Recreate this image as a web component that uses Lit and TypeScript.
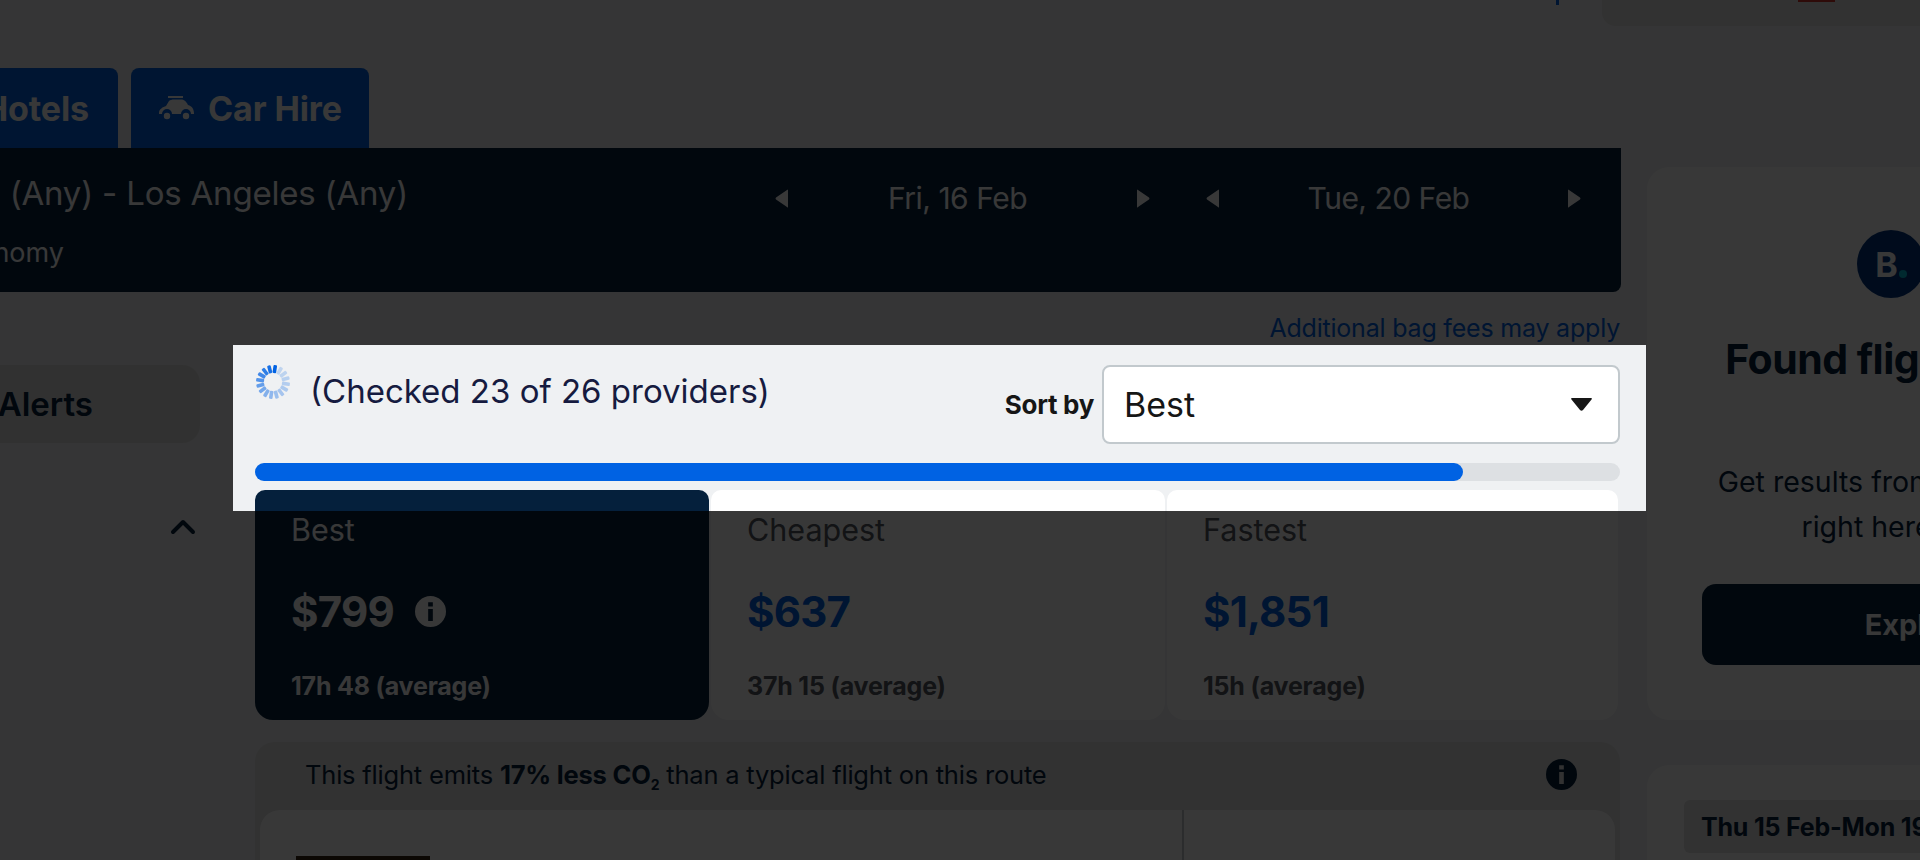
import { LitElement, html, css, svg } from "lit";
import { customElement } from "lit/decorators.js";

const CHECKED = 23;
const TOTAL = 26;

const cards = [
	{ label: "Best", price: "$799", sub: "17h 48 (average)", active: true },
	{ label: "Cheapest", price: "$637", sub: "37h 15 (average)", active: false },
	{ label: "Fastest", price: "$1,851", sub: "15h (average)", active: false },
];

const info = (cls: string) => html`
	<svg class=${cls} viewBox="0 0 24 24">
		<path fill="currentColor" fill-rule="evenodd" d="M12 0a12 12 0 1 0 0 24a12 12 0 0 0 0-24z M10.2 4.8h3.6v3.4h-3.6z M10.2 10h3.6v9.4h-3.6z"></path>
	</svg>
`;

const arrow = (left: boolean) => html`
	<svg class="arrow" viewBox="0 0 13 19">
		<path fill="currentColor" d=${left ? "M13 1L13 18Q13 19 12 18L1 10.5Q0 9.5 1 8.5L12 1Q13 0 13 1z" : "M0 1L0 18Q0 19 1 18L12 10.5Q13 9.5 12 8.5L1 1Q0 0 0 1z"}></path>
	</svg>
`;

// 16 bars, darkest at the top, fading counter-clockwise
const spinner = () => html`
	<svg class="spinner" viewBox="0 0 36 36">
		${Array.from({ length: 16 }, (_, i) => svg`
			<rect x="16.2" y="1" width="3.6" height="8" rx="1" fill="#0062e3"
				opacity=${(0.2 + 0.8 * Math.pow(1 - i / 16, 2)).toFixed(2)}
				transform=${`rotate(${8 - i * 22.5} 18 18)`}></rect>
		`)}
	</svg>
`;

@customElement("app-root")
export class AppRoot extends LitElement {
	static styles = css`
		:host {
			display: block;
			--font: "Inter", "Liberation Sans", sans-serif;
		}
		.page {
			position: relative;
			width: 1920px;
			height: 860px;
			overflow: hidden;
			background: #eff1f3;
			font-family: var(--font);
			color: #05203c;
		}
		.spot {
			position: absolute;
			left: 233px;
			top: 345px;
			width: 1413px;
			height: 166px;
			box-shadow: 0 0 0 2000px rgba(0, 0, 0, 0.78);
			pointer-events: none;
		}

		.head {
			height: 68px;
			display: flex;
			justify-content: flex-end;
			align-items: flex-start;
		}
		.tick {
			width: 3px;
			height: 5px;
			margin-right: 43px;
			background: #0062e3;
		}
		.locale {
			width: 318px;
			height: 26px;
			display: flex;
			justify-content: flex-end;
			background: #e2e2e2;
			border-bottom-left-radius: 14px;
		}
		.flag {
			width: 37px;
			height: 2px;
			margin-right: 85px;
			background: #d0342c;
		}

		.tabs {
			height: 80px;
			display: flex;
			gap: 13px;
		}
		.tab {
			display: flex;
			align-items: center;
			justify-content: flex-end;
			overflow: hidden;
			white-space: nowrap;
			background: #0062e3;
			color: #fff;
			border-radius: 8px 8px 0 0;
			font-size: 34px;
			font-weight: 700;
			letter-spacing: -0.1px;
		}
		.tab.hotels {
			width: 118px;
			padding-right: 29px;
			box-sizing: border-box;
			border-top-left-radius: 0;
		}
		.tab.car {
			width: 238px;
			box-sizing: border-box;
			padding-left: 27px;
			justify-content: flex-start;
			gap: 13px;
		}
		.car-icon {
			width: 37px;
			height: 26px;
			flex: none;
		}

		.body {
			display: flex;
		}
		.main {
			width: 1621px;
			flex: none;
		}
		.bar {
			height: 144px;
			display: flex;
			background: #05203c;
			color: #fff;
			border-bottom-right-radius: 8px;
		}
		.trip {
			width: 775px;
			flex: none;
			display: flex;
			flex-direction: column;
			align-items: flex-end;
			overflow: hidden;
			white-space: nowrap;
		}
		.route {
			flex: none;
			margin: 26px 367px 0 0;
			font-size: 33px;
			line-height: 38px;
			letter-spacing: -0.2px;
		}
		.cabin {
			flex: none;
			margin: 24px 711px 0 0;
			font-size: 27px;
			line-height: 34px;
		}
		.dates {
			display: flex;
			gap: 56px;
		}
		.date {
			width: 375px;
			height: 100px;
			display: flex;
			align-items: center;
			justify-content: space-between;
			font-size: 30px;
			letter-spacing: -0.5px;
		}
		.date span {
			margin-right: 10px;
		}
		.arrow {
			width: 13px;
			height: 19px;
		}

		.lower {
			display: flex;
		}
		.rail {
			width: 255px;
			flex: none;
		}
		.alerts {
			width: 200px;
			height: 78px;
			margin-top: 73px;
			box-sizing: border-box;
			padding-right: 107px;
			display: flex;
			align-items: center;
			justify-content: flex-end;
			overflow: hidden;
			white-space: nowrap;
			background: #dfdfdf;
			border-radius: 0 18px 18px 0;
			font-size: 33px;
			font-weight: 600;
		}
		.chev {
			display: block;
			width: 26px;
			height: 16px;
			margin: 76px 0 0 170px;
		}

		.results {
			width: 1365px;
			flex: none;
		}
		.note {
			height: 53px;
			box-sizing: border-box;
			padding-top: 20px;
			text-align: right;
			color: #0062e3;
			font-size: 25px;
			line-height: 32px;
			letter-spacing: -0.2px;
		}
		.sort {
			height: 118px;
			box-sizing: border-box;
			padding-top: 20px;
			display: flex;
			justify-content: space-between;
			align-items: flex-start;
		}
		.status {
			display: flex;
			align-items: flex-start;
			gap: 19px;
		}
		.spinner {
			width: 36px;
			height: 36px;
			margin-top: -1px;
		}
		.checked {
			margin-top: 6px;
			font-size: 33px;
			line-height: 40px;
			color: #161b40;
		}
		.picker {
			display: flex;
			align-items: center;
			gap: 8px;
		}
		.picker label {
			font-size: 26px;
			font-weight: 700;
			color: #161616;
			letter-spacing: -0.3px;
		}
		.select {
			width: 518px;
			height: 79px;
			box-sizing: border-box;
			padding: 0 26px 0 20px;
			display: flex;
			align-items: center;
			justify-content: space-between;
			background: #fff;
			border: 2px solid #c2c9cd;
			border-radius: 8px;
			font-size: 34px;
			color: #161616;
		}
		.caret {
			width: 21px;
			height: 13px;
		}
		.track {
			height: 18px;
			border-radius: 9px;
			background: #dde0e3;
		}
		.fill {
			height: 100%;
			border-radius: 9px;
			background: #0062e3;
		}

		.cards {
			margin-top: 9px;
			display: grid;
			grid-template-columns: 454px 454px 451px;
			gap: 2px;
		}
		.card {
			height: 230px;
			box-sizing: border-box;
			padding: 22px 0 0 36px;
			background: #fff;
			border-radius: 10px 10px 18px 18px;
		}
		.card.active {
			background: #05203c;
			color: #fff;
		}
		.label {
			font-size: 30.5px;
			line-height: 36px;
			color: #545860;
		}
		.card.active .label {
			color: #fff;
		}
		.price {
			margin-top: 42px;
			display: flex;
			align-items: center;
			gap: 21px;
			height: 42px;
			font-size: 42px;
			font-weight: 700;
			letter-spacing: -0.8px;
			color: #0062e3;
		}
		.card.active .price {
			color: #fff;
		}
		.info-s {
			width: 31px;
			height: 31px;
		}
		.sub {
			margin-top: 38px;
			font-size: 25px;
			font-weight: 700;
			line-height: 32px;
			letter-spacing: -0.2px;
			color: #545860;
		}
		.card.active .sub {
			color: #fff;
		}

		.eco {
			margin-top: 22px;
			box-sizing: border-box;
			padding: 0 5px;
			background: #e2e2e2;
			border-radius: 20px 20px 0 0;
		}
		.eco-head {
			height: 68px;
			box-sizing: border-box;
			padding: 0 38px 4px 45px;
			display: flex;
			align-items: center;
			justify-content: space-between;
			font-size: 25.5px;
			letter-spacing: -0.2px;
		}
		.eco-head sub {
			font-size: 14px;
			line-height: 0;
		}
		.info-m {
			width: 31px;
			height: 31px;
		}
		.ticket {
			height: 120px;
			display: flex;
			background: #fff;
			border-radius: 20px 20px 0 0;
		}
		.legs {
			width: 924px;
			box-sizing: border-box;
			padding: 46px 0 0 36px;
			border-right: 2px solid #c2c9cd;
		}
		.logo {
			width: 134px;
			height: 40px;
			background: #3a2616;
		}

		.side {
			width: 299px;
			flex: none;
			margin-left: 26px;
			padding-top: 19px;
		}
		.promo {
			width: 542px;
			height: 553px;
			box-sizing: border-box;
			padding: 63px 55px 0;
			text-align: center;
			background: #fff;
			border-radius: 22px;
		}
		.logos {
			height: 68px;
			display: flex;
			padding-left: 155px;
		}
		.booking {
			width: 68px;
			height: 68px;
			flex: none;
			display: flex;
			align-items: center;
			justify-content: center;
			gap: 1px;
			border-radius: 50%;
			background: #003580;
			color: #fff;
			font-size: 34px;
			font-weight: 700;
		}
		.booking i {
			width: 8px;
			height: 8px;
			margin-top: 20px;
			border-radius: 50%;
			background: #00bcd4;
		}
		.promo h2 {
			margin: 40px -40px 0;
			font-size: 41px;
			line-height: 42px;
			font-weight: 700;
			white-space: nowrap;
			letter-spacing: -0.5px;
		}
		.promo p {
			margin: 79px -40px 0;
			font-size: 28.5px;
			line-height: 45px;
			white-space: nowrap;
		}
		.cta {
			height: 81px;
			margin-top: 35px;
			display: flex;
			align-items: center;
			justify-content: center;
			background: #05203c;
			color: #fff;
			border-radius: 14px;
			font-size: 29px;
			font-weight: 700;
		}
		.dates-card {
			width: 542px;
			height: 200px;
			margin-top: 45px;
			box-sizing: border-box;
			padding: 35px 37px;
			background: #fff;
			border-radius: 22px;
		}
		.chip {
			width: 420px;
			height: 53px;
			box-sizing: border-box;
			padding-left: 17px;
			display: flex;
			align-items: center;
			background: #e2e2e2;
			border-radius: 6px;
			font-size: 25px;
			font-weight: 700;
			white-space: nowrap;
			letter-spacing: -0.2px;
		}
	`;

	render() {
		const pct = (CHECKED / TOTAL) * 100;
		return html`
			<div class="page">
				<div class="head">
					<div class="tick"></div>
					<div class="locale"><div class="flag"></div></div>
				</div>

				<div class="tabs">
					<div class="tab hotels">Hotels</div>
					<div class="tab car">
						<svg class="car-icon" viewBox="0 0 37 26">
							<path fill="currentColor" d="M10 1h15v2H10z M1 18C1 14 5 12 8 11L11 6C12 5 14 4.500 16 4.500L23 4.500C26 4.500 28 6 30 10C34 11 36 14 36 19L33 19A5 5 0 0 0 23 19L14 19A5 5 0 0 0 4 19L1 19z"></path>
							<circle cx="9" cy="21" r="3.200" fill="currentColor"></circle>
							<circle cx="28" cy="21" r="3.200" fill="currentColor"></circle>
						</svg>
						Car Hire
					</div>
				</div>

				<div class="body">
					<div class="main">
						<div class="bar">
							<div class="trip">
								<div class="route">San Francisco (Any) - Los Angeles (Any)</div>
								<div class="cabin">1 adult, Economy</div>
							</div>
							<div class="dates">
								<div class="date">${arrow(true)}<span>Fri, 16 Feb</span>${arrow(false)}</div>
								<div class="date">${arrow(true)}<span>Tue, 20 Feb</span>${arrow(false)}</div>
							</div>
						</div>

						<div class="lower">
							<div class="rail">
								<div class="alerts">Price Alerts</div>
								<svg class="chev" viewBox="0 0 26 16">
									<path d="M3 13L13 3L23 13" fill="none" stroke="#05203c" stroke-width="4" stroke-linecap="round" stroke-linejoin="round"></path>
								</svg>
							</div>

							<div class="results">
								<div class="note">Additional bag fees may apply</div>
								<div class="sort">
									<div class="status">
										${spinner()}
										<div class="checked">(Checked ${CHECKED} of ${TOTAL} providers)</div>
									</div>
									<div class="picker">
										<label>Sort by</label>
										<div class="select">
											Best
											<svg class="caret" viewBox="0 0 21 13"><path fill="#161616" d="M1 0H20Q21.500 0 20.500 1.500L12 12Q10.500 13.500 9 12L.5 1.500Q-.5 0 1 0z"></path></svg>
										</div>
									</div>
								</div>
								<div class="track"><div class="fill" style="width: ${pct}%"></div></div>

								<div class="cards">
									${cards.map(c => html`
										<div class="card ${c.active ? "active" : ""}">
											<div class="label">${c.label}</div>
											<div class="price">${c.price}${c.active ? info("info-s") : ""}</div>
											<div class="sub">${c.sub}</div>
										</div>
									`)}
								</div>

								<div class="eco">
									<div class="eco-head">
										<div>This flight emits <b>17% less CO<sub>2</sub></b> than a typical flight on this route</div>
										${info("info-m")}
									</div>
									<div class="ticket">
										<div class="legs"><div class="logo"></div></div>
									</div>
								</div>
							</div>
						</div>
					</div>

					<div class="side">
						<div class="promo">
							<div class="logos"><div class="booking">B<i></i></div></div>
							<h2>Found flights to LA?</h2>
							<p>Get results from Booking.com<br />right here for you</p>
							<div class="cta">Explore</div>
						</div>
						<div class="dates-card">
							<div class="chip">Thu 15 Feb-Mon 19 Feb</div>
						</div>
					</div>
				</div>

				<div class="spot"></div>
			</div>
		`;
	}
}
